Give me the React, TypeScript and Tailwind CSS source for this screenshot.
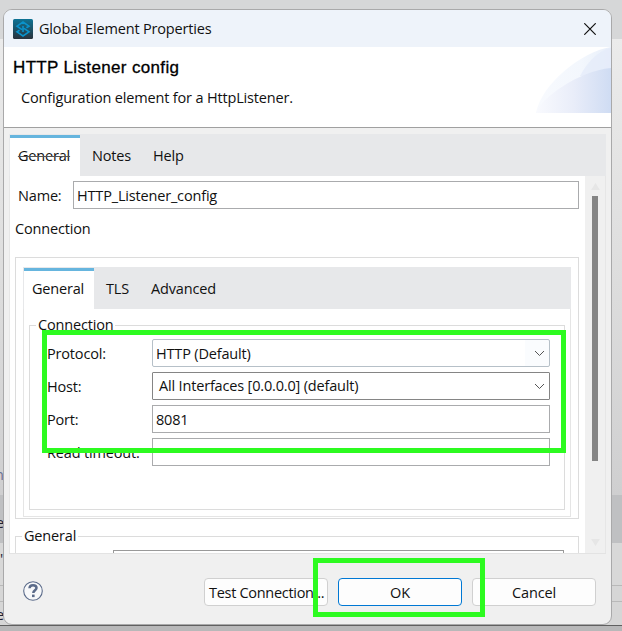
import { ReactNode } from "react";
import clsx from "clsx";

type TabsProps = {
    tabs: string[];
    struck?: boolean;
};
const Tabs = ({ tabs, struck }: TabsProps) => {
    return (
        <div className="flex h-[42px] shrink-0 bg-[#e7e8ea] pl-px pt-px">
            {tabs.map((tab, i) => (
                <button
                    key={tab}
                    type="button"
                    className={clsx(
                        "h-[41px]",
                        i === 0
                            ? "w-[70px] border-t-[3px] border-[#66b5de] bg-white pb-[3px] pr-[2px] text-center"
                            : "pl-3 pr-[10px] pt-px",
                        i === 0 && struck && "line-through decoration-[#555] decoration-1"
                    )}
                >
                    {tab}
                </button>
            ))}
        </div>
    );
};

type FieldRowProps = {
    label: string;
    children: ReactNode;
};
const FieldRow = ({ label, children }: FieldRowProps) => (
    <div className="flex h-7 items-center">
        <label className="w-[105px] shrink-0 pt-[2px]">{label}</label>
        {children}
    </div>
);

const Chevron = () => (
    <svg className="h-[7px] w-[11px]" viewBox="0 0 11 7" fill="none" stroke="#555" strokeWidth="1">
        <path d="M1 1l4.5 4.5L10 1" />
    </svg>
);

const Logo = () => (
    <svg className="size-5" viewBox="0 0 20 20" fill="none">
        <defs>
            <linearGradient id="logo" x1="0" y1="0" x2="0" y2="1">
                <stop offset="0" stopColor="#0d7395" />
                <stop offset="1" stopColor="#2a323c" />
            </linearGradient>
        </defs>
        <rect width="20" height="20" rx="1.5" fill="url(#logo)" />
        <path
            d="M9 10.6L4 7.2 10 3l6 4.2-2.6 1.6M11 9.4l5 3.4-6 4.2-6-4.2 2.6-1.6M10 7v3.6M10 9.4V13"
            stroke="#0a93cc"
            strokeWidth="1.6"
        />
    </svg>
);

const Swoosh = () => (
    <svg className="h-[66px] w-[75px]" viewBox="0 0 75 66">
        <defs>
            <linearGradient id="swooshA">
                <stop offset="0" stopColor="#f8fafe" />
                <stop offset="0.6" stopColor="#f3f7fd" />
                <stop offset="1" stopColor="#e8effa" />
            </linearGradient>
            <linearGradient id="swooshB">
                <stop offset="0" stopColor="#f9fafe" />
                <stop offset="0.5" stopColor="#e9edf9" />
                <stop offset="1" stopColor="#cfdcf3" />
            </linearGradient>
        </defs>
        <path d="M0 66C5 38 44 5 75 0v66z" fill="url(#swooshA)" />
        <path d="M44 29C51 16 61 4 75 1v28z" fill="#e4ebf9" opacity=".75" />
        <path d="M0 66C4 52 42 24 75 21v45z" fill="url(#swooshB)" />
    </svg>
);

const Backdrop = () => (
    <div className="absolute inset-0 flex flex-col text-[#223]">
        <div className="h-[39px] bg-[#d6d7d8]" />
        <div className="h-[456px] bg-linear-to-b from-[#ebebeb] via-[#dedede] to-[#cfcfd0] pt-[427px] leading-[18px] text-[#6a6f92]">
            <span className="-ml-[5px]">n</span>
        </div>
        <div className="h-12 bg-[#bfc0c2] pt-[19px] leading-[18px]">
            <span className="-ml-1">e</span>
        </div>
        <div className="h-[43px] border-b border-[#b9b9b9] bg-[#d8d8d8] pt-[7px] leading-[18px]">"</div>
        <div className="h-4 border-b border-[#b9b9b9] bg-[#d6d6d6]" />
        <div className="h-6 border-b border-[#606060] bg-[#d6d6d6] pt-1 leading-[18px]">
            <span className="-ml-1">e</span>
        </div>
        <div className="flex-1 bg-[#b8b8b9]" />
    </div>
);

const App = () => {
    return (
        <div className="relative h-[631px] w-[622px] overflow-hidden pl-[3px] pt-[9px] font-['Open_Sans','Noto_Sans',sans-serif] text-[14.5px] leading-[18px] tracking-[-0.17px] text-[#111]">
            <Backdrop />
            <div className="relative flex h-[616px] w-[609px] flex-col overflow-hidden rounded-[9px] border border-[#a9a9aa] bg-[#f0f0f0]">
                <div className="flex h-[37px] shrink-0 items-center bg-[#eef3fa] pl-[9px] pr-[15px]">
                    <Logo />
                    <span className="ml-[6px] flex-1">Global Element Properties</span>
                    <svg className="size-3" viewBox="0 0 12 12" stroke="#111" strokeWidth="1.2">
                        <path d="M.3.3l11.4 11.4M11.7.3L.3 11.7" />
                    </svg>
                </div>
                <div className="flex h-[81px] shrink-0 justify-between border-b border-[#a0a0a0] bg-white">
                    <div className="pl-[9px] pt-3">
                        <h1 className="font-['Liberation_Sans',sans-serif] text-[17px] tracking-[0.35px] text-black [-webkit-text-stroke:0.3px_black]">
                            HTTP Listener config
                        </h1>
                        <p className="pl-2 pt-3">Configuration element for a HttpListener.</p>
                    </div>
                    <Swoosh />
                </div>
                <div className="ml-[5px] mt-[6px] flex h-[420px] w-[597px] shrink-0 flex-col border-b border-[#e3e3e3]">
                    <Tabs tabs={["General", "Notes", "Help"]} struck />
                    <div className="flex min-h-0 flex-1 border-x border-[#e6e6e6]">
                        <div className="w-[575px] overflow-hidden bg-white pl-[5px] pt-[5px]">
                            <div className="flex h-7 items-center">
                                <label className="w-[58px] pl-[3px] pt-[2px]">Name:</label>
                                <div className="flex h-7 w-[506px] items-center border border-[#aaabad] pl-[3px] pt-[2px]">
                                    HTTP_Listener_config
                                </div>
                            </div>
                            <div className="pt-[11px]">Connection</div>
                            <div className="mt-[19px] h-[262px] w-[564px] border border-[#dcdcdc] pl-[7px] pt-[9px]">
                                <div className="h-[250px] w-[548px] border-b border-[#e5e5e5]">
                                    <Tabs tabs={["General", "TLS", "Advanced"]} />
                                    <div className="h-[207px] border-x border-[#e5e5e5] pl-[5px] pt-[7px]">
                                        <fieldset className="h-[194px] w-[536px] border border-[#dcdcdc] pl-[17px]">
                                            <legend className="-ml-[11px] h-[18px] px-[2px]">Connection</legend>
                                            <div className="flex flex-col gap-[5px] pt-[5px]">
                                                <FieldRow label="Protocol:">
                                                    <div className="flex h-7 w-[398px] items-center justify-between rounded-[2px] border border-[#b6c0c8] bg-linear-to-r from-white from-94% to-[#fafcfe] to-94% pl-[3px] pr-[4px] pt-px">
                                                        HTTP (Default)
                                                        <Chevron />
                                                    </div>
                                                </FieldRow>
                                                <FieldRow label="Host:">
                                                    <div className="flex h-7 w-[398px] items-center justify-between rounded-[1px] border border-[#858585] pl-[6px] pr-[4px]">
                                                        All Interfaces [0.0.0.0] (default)
                                                        <Chevron />
                                                    </div>
                                                </FieldRow>
                                                <FieldRow label="Port:">
                                                    <div className="flex h-7 w-[398px] items-center border border-[#aaabad] pl-[3px] pt-[2px]">
                                                        8081
                                                    </div>
                                                </FieldRow>
                                                <FieldRow label="Read timeout:">
                                                    <div className="h-7 w-[398px] border border-[#aaabad]" />
                                                </FieldRow>
                                            </div>
                                        </fieldset>
                                    </div>
                                </div>
                            </div>
                            <fieldset className="mt-2 h-[60px] w-[564px] border border-[#dcdcdc]">
                                <legend className="ml-[6px] px-[2px]">General</legend>
                                <div className="ml-[97px] mt-[5px] h-7 w-[451px] border border-[#999]" />
                            </fieldset>
                        </div>
                        <div className="flex w-5 flex-col items-center pt-[7px]">
                            <svg className="h-[7px] w-[9px] shrink-0" viewBox="0 0 9 7" fill="#e6e6e6">
                                <path d="M4.5 0L9 7H0z" />
                            </svg>
                            <div className="mt-[6px] h-[265px] w-[6px] shrink-0 bg-[#858585]" />
                            <svg className="mt-[78px] h-[7px] w-[9px] shrink-0" viewBox="0 0 9 7" fill="#e6e6e6">
                                <path d="M4.5 7L9 0H0z" />
                            </svg>
                        </div>
                    </div>
                </div>
                <div className="flex flex-1 items-start pl-[19px] pr-[15px] pt-6">
                    <svg className="mt-[3px] size-5" viewBox="0 0 20 20">
                        <circle cx="10" cy="10" r="9.3" fill="#f7f8fa" stroke="#5b6b8a" strokeWidth="1.1" />
                        <path
                            d="M6.5 7.3C6.6 5.2 8.1 4.2 10 4.2s3.5 1 3.5 2.8c0 2.1-3.2 2.4-3.2 5"
                            fill="none"
                            stroke="#5b6b8a"
                            strokeWidth="2.5"
                        />
                        <rect x="9" y="13.6" width="2.6" height="2.5" fill="#5b6b8a" />
                    </svg>
                    <div className="ml-auto flex gap-[10px]">
                        <button
                            type="button"
                            className="h-7 w-[124px] whitespace-nowrap rounded-[4px] border border-[#d0d0d0] bg-[#fdfdfd] pl-1 pt-px text-left tracking-[-0.3px]"
                        >
                            Test Connection...
                        </button>
                        <button type="button" className="h-7 w-[124px] rounded-[4px] border border-[#0078d4] bg-[#fdfdfd] pt-px">
                            OK
                        </button>
                        <button type="button" className="h-7 w-[124px] rounded-[4px] border border-[#d0d0d0] bg-[#fdfdfd] pt-px">
                            Cancel
                        </button>
                    </div>
                </div>
            </div>
            {/* highlight marks over the dialog */}
            <div className="absolute left-[42px] top-[330px] h-[123px] w-[524px] border-[5px] border-[#2dfb20]" />
            <div className="absolute left-[313px] top-[558px] h-[59px] w-[172px] border-[5px] border-[#2dfb20]" />
        </div>
    );
};

export default App;
